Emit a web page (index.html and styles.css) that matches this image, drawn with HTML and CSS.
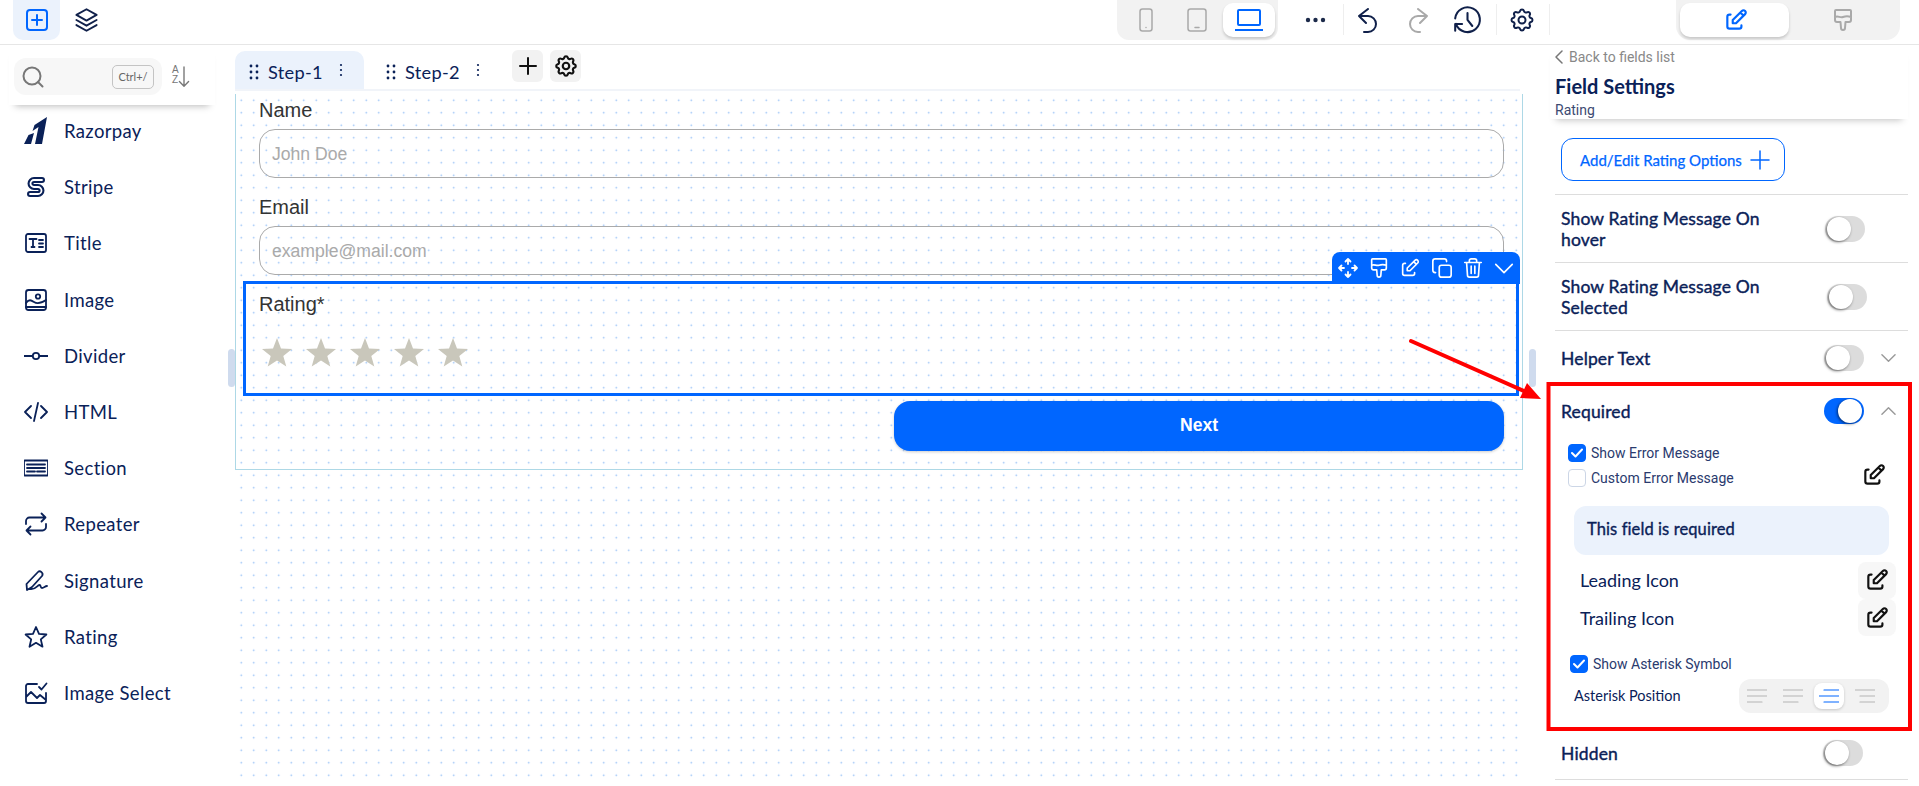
FILE: index.html
```html
<!DOCTYPE html>
<html lang="en">
<head>
<meta charset="utf-8">
<title>Form builder</title>
<link rel="stylesheet" href="styles.css">
</head>
<body>
<svg class="defs" width="0" height="0">
  <defs>
    <symbol id="edit" viewBox="0 0 24 24"><path d="M7 7h-1a2 2 0 0 0 -2 2v9a2 2 0 0 0 2 2h9a2 2 0 0 0 2 -2v-1M20.385 6.585a2.100 2.100 0 0 0 -2.970 -2.970l-8.415 8.385v3h3l8.385 -8.415zM16 5l3 3"/></symbol>
    <symbol id="gear" viewBox="0 0 24 24"><path d="M10.325 4.317c.426 -1.756 2.924 -1.756 3.350 0a1.724 1.724 0 0 0 2.573 1.066c1.543 -.94 3.310 .826 2.370 2.370a1.724 1.724 0 0 0 1.065 2.572c1.756 .426 1.756 2.924 0 3.350a1.724 1.724 0 0 0 -1.066 2.573c.94 1.543 -.826 3.310 -2.370 2.370a1.724 1.724 0 0 0 -2.572 1.065c-.426 1.756 -2.924 1.756 -3.350 0a1.724 1.724 0 0 0 -2.573 -1.066c-1.543 .94 -3.310 -.826 -2.370 -2.370a1.724 1.724 0 0 0 -1.065 -2.572c-1.756 -.426 -1.756 -2.924 0 -3.350a1.724 1.724 0 0 0 1.066 -2.573c-.94 -1.543 .826 -3.310 2.370 -2.370c1 .608 2.296 .07 2.572 -1.065z"/><circle cx="12" cy="12" r="3"/></symbol>
    <symbol id="brush" viewBox="0 0 24 24"><path d="M5 2h14a1 1 0 0 1 1 1v9a2 2 0 0 1 -2 2h-3.500l-.5 6a2 2 0 0 1 -4 0l-.5 -6H6a2 2 0 0 1 -2 -2V3a1 1 0 0 1 1 -1zM4 9c3 -1.500 5 1 8 0s5 -1 8 0"/></symbol>
    <symbol id="grip" viewBox="0 0 10 16"><circle cx="2" cy="2" r="1.400"/><circle cx="8" cy="2" r="1.400"/><circle cx="2" cy="8" r="1.400"/><circle cx="8" cy="8" r="1.400"/><circle cx="2" cy="14" r="1.400"/><circle cx="8" cy="14" r="1.400"/></symbol>
    <symbol id="kebab" viewBox="0 0 4 14"><circle cx="2" cy="2" r="1.100"/><circle cx="2" cy="7" r="1.100"/><circle cx="2" cy="12" r="1.100"/></symbol>
  </defs>
</svg>

<header class="topbar">
  <button class="add-btn">
    <svg class="ic ic-22 blue" viewBox="0 0 22 22"><rect x="1" y="1" width="20" height="20" rx="3"/><path d="M11 6v10M6 11h10"/></svg>
  </button>
  <svg class="ic ic-layers navy-dark" viewBox="3 2 18 19"><path d="M12 3l8 4.500 -8 4.500 -8 -4.500zM4 11.500l8 4.500 8 -4.500M4 15.500l8 4.500 8 -4.500"/></svg>

  <div class="devices">
    <svg class="ic dev-phone grey" viewBox="0 0 14 24"><rect x="1" y="1" width="12" height="22" rx="2.500"/><path d="M7 19.500v.1"/></svg>
    <svg class="ic dev-tablet grey" viewBox="0 0 20 24"><rect x="1" y="1" width="18" height="22" rx="2.500"/><path d="M8 19.500h4"/></svg>
    <span class="dev-active">
      <svg class="ic dev-laptop blue" viewBox="0 0 28 24"><rect x="3" y="2" width="22" height="15" rx="1"/><path d="M0 22h28"/></svg>
    </span>
  </div>

  <svg class="tool-dots" viewBox="0 0 21 6"><circle cx="3" cy="3" r="2.200"/><circle cx="10.500" cy="3" r="2.200"/><circle cx="18" cy="3" r="2.200"/></svg>
  <span class="sep sep-a"></span>
  <svg class="ic tool-undo navy-dark" viewBox="0 0 20 26"><path d="M10 1L1 8l7 7M1 8h9a8 8 0 0 1 0 16H6"/></svg>
  <svg class="ic tool-redo grey" viewBox="0 0 20 26"><path d="M10 1l9 7 -7 7M19 8h-9a8 8 0 0 0 0 16h2"/></svg>
  <svg class="ic tool-hist navy-dark" viewBox="0 0 24 24"><path d="M12 7v5l3.500 4.500M3.050 11a9 9 0 1 1 .5 4m-.5 5v-5h5" transform="translate(0 -.5)"/></svg>
  <span class="sep sep-b"></span>
  <svg class="ic tool-gear navy-dark"><use href="#gear"/></svg>
  <span class="sep sep-c"></span>

  <div class="modes">
    <span class="mode-active"><svg class="ic ic-26 blue"><use href="#edit"/></svg></span>
    <span class="mode-idle"><svg class="ic ic-24 grey"><use href="#brush"/></svg></span>
  </div>
</header>

<div class="main">
  <aside class="sidebar">
    <div class="search-head">
      <div class="search">
        <svg class="ic search-ic" viewBox="0 0 22 22"><circle cx="10" cy="10" r="8.500"/><path d="M16 16l4.500 4.500"/></svg>
        <span class="kbd">Ctrl+/</span>
      </div>
      <svg class="ic sort-ic" viewBox="0 0 14 24"><path d="M7 1v21M2 17l5 5 5 -5"/></svg>
      <span class="sort-az">A<br>Z</span>
    </div>
    <ul class="items">
      <li class="item"><svg class="item-ic solid" viewBox="0 0 24 28"><path d="M23 0l-5 27h-7l3.500 -17 -6 4 2 -6zM4.500 18l5.500 -2 -3 11H0z"/></svg>Razorpay</li>
      <li class="item"><svg class="item-ic" viewBox="0 0 24 24"><path class="s-out" d="M18 5H10a3.500 3.500 0 0 0 0 7h4a3.500 3.500 0 0 1 0 7H6"/><path class="s-in" d="M18 5H10a3.500 3.500 0 0 0 0 7h4a3.500 3.500 0 0 1 0 7H6"/></svg>Stripe</li>
      <li class="item"><svg class="item-ic line" viewBox="0 0 24 24"><rect x="2" y="3" width="20" height="18" rx="2"/><path d="M5.500 8h7M9 8v8M7.500 16h3M15 9h4M15 12.500h4M15 16h4"/></svg>Title</li>
      <li class="item"><svg class="item-ic line" viewBox="0 0 24 24"><rect x="2" y="2" width="20" height="20" rx="2.500"/><circle cx="14" cy="8.500" r="2.200"/><path d="M2 15c3 -4 5 -3 8 -1s6 2 12 -2M2 19h20"/></svg>Image</li>
      <li class="item"><svg class="item-ic line" viewBox="0 0 24 24"><path d="M0 12h8M16 12h8"/><circle cx="12" cy="12" r="3.200"/></svg>Divider</li>
      <li class="item"><svg class="item-ic line" viewBox="0 0 24 24"><path d="M7 6l-6 6 6 6M17 6l6 6 -6 6M14 3l-4 18"/></svg>HTML</li>
      <li class="item"><svg class="item-ic line" viewBox="0 0 24 24"><rect x="0" y="4.500" width="24" height="15" rx=".5"/><path d="M3 8.500h18M3 12h18M3 15.500h8M13 15.500h8"/></svg>Section</li>
      <li class="item"><svg class="item-ic line" viewBox="0 0 24 24"><path d="M2 12v-3a3.500 3.500 0 0 1 3.500 -3.500h16m-4 -4l4 4 -4 4M22 12v3a3.500 3.500 0 0 1 -3.500 3.500h-16m4 4l-4 -4 4 -4"/></svg>Repeater</li>
      <li class="item"><svg class="item-ic line" viewBox="0 0 24 24"><path d="M3 21l-.5 -6L14 3c2 -2 6 1 4 4L8 18zM6 20c5 1 7 -3 9 -4s1 3 3 3 3 -2 5 -2"/></svg>Signature</li>
      <li class="item"><svg class="item-ic line" viewBox="0 0 24 24"><path d="M12 2l3 6.800 7.400 .7 -5.600 4.900 1.700 7.300 -6.500 -3.900 -6.500 3.900 1.700 -7.300 -5.600 -4.900 7.400 -.7z"/></svg>Rating</li>
      <li class="item"><svg class="item-ic line" viewBox="0 0 24 24"><path d="M13 3H4a2 2 0 0 0 -2 2v15a2 2 0 0 0 2 2h16a2 2 0 0 0 2 -2v-8M2 16l5 -5 6 6 3 -3 6 5M15 6l2.500 2.500 5 -6"/></svg>Image Select</li>
    </ul>
  </aside>

  <section class="canvas">
    <span class="handle handle-l"></span>
    <nav class="tabs">
      <div class="tab tab-on">
        <svg class="grip"><use href="#grip"/></svg><span class="tab-name">Step-1</span><svg class="kebab"><use href="#kebab"/></svg>
      </div>
      <div class="tab tab-off">
        <svg class="grip"><use href="#grip"/></svg><span class="tab-name">Step-2</span><svg class="kebab"><use href="#kebab"/></svg>
      </div>
      <span class="tab-btn tab-plus"><svg class="ic ic-18 black" viewBox="0 0 18 18"><path d="M9 1v16M1 9h16"/></svg></span>
      <span class="tab-btn"><svg class="ic ic-26 black"><use href="#gear"/></svg></span>
    </nav>
    <div class="stage">
      <div class="frame">
        <div class="field">
          <label class="f-label">Name</label>
          <div class="f-input">John Doe</div>
        </div>
        <div class="field field-next">
          <label class="f-label">Email</label>
          <div class="f-input">example@mail.com</div>
        </div>
        <div class="rating-box">
          <div class="toolbar">
            <svg class="ic tb" viewBox="1 1 22 22"><path d="M12 3v5M12 16v5M3 12h5M16 12h5M9.500 5.500L12 3l2.500 2.500M9.500 18.500L12 21l2.500 -2.500M5.500 9.500L3 12l2.500 2.500M18.500 9.500L21 12l-2.500 2.500"/></svg>
            <svg class="ic tb"><use href="#brush"/></svg>
            <svg class="ic tb"><use href="#edit"/></svg>
            <svg class="ic tb" viewBox="0 0 24 24"><rect x="9" y="9" width="13" height="13" rx="2.500"/><path d="M17 5V4.500A2.500 2.500 0 0 0 14.500 2h-10A2.500 2.500 0 0 0 2 4.500v10A2.500 2.500 0 0 0 4.500 17H5"/></svg>
            <svg class="ic tb" viewBox="0 0 24 24"><path d="M3 6h18M8 6V4a2 2 0 0 1 2 -2h4a2 2 0 0 1 2 2v2M5 6l1 14a2 2 0 0 0 2 2h8a2 2 0 0 0 2 -2l1 -14M10 10v8M14 10v8"/></svg>
            <svg class="ic tb" viewBox="0 0 24 24"><path d="M3 8l9 9 9 -9"/></svg>
          </div>
          <div class="f-label">Rating*</div>
          <div class="stars">
            <svg class="star" viewBox="0 0 30 30"><path d="M15 1l4 10.500 11 .5 -8.700 7 3 10.500L15 23.500 5.700 29.500l3 -10.500L0 12l11 -.5z"/></svg>
            <svg class="star" viewBox="0 0 30 30"><path d="M15 1l4 10.500 11 .5 -8.700 7 3 10.500L15 23.500 5.700 29.500l3 -10.500L0 12l11 -.5z"/></svg>
            <svg class="star" viewBox="0 0 30 30"><path d="M15 1l4 10.500 11 .5 -8.700 7 3 10.500L15 23.500 5.700 29.500l3 -10.500L0 12l11 -.5z"/></svg>
            <svg class="star" viewBox="0 0 30 30"><path d="M15 1l4 10.500 11 .5 -8.700 7 3 10.500L15 23.500 5.700 29.500l3 -10.500L0 12l11 -.5z"/></svg>
            <svg class="star" viewBox="0 0 30 30"><path d="M15 1l4 10.500 11 .5 -8.700 7 3 10.500L15 23.500 5.700 29.500l3 -10.500L0 12l11 -.5z"/></svg>
          </div>
        </div>
        <button class="next">Next</button>
      </div>
    </div>
    <span class="handle handle-r"></span>
  </section>

  <aside class="panel">
    <div class="p-head">
      <div class="p-back"><svg class="ic back-ic" viewBox="0 0 8 14"><path d="M7 1L1 7l6 6"/></svg>Back to fields list</div>
      <div class="p-title">Field Settings</div>
      <div class="p-sub">Rating</div>
    </div>
    <div class="p-add">
      <button class="add-opt">Add/Edit Rating Options<svg class="ic add-plus" viewBox="0 0 20 20"><path d="M10 1v18M1 10h18"/></svg></button>
    </div>
    <div class="p-row">
      <span class="p-label">Show Rating Message On hover</span>
      <span class="toggle"></span>
    </div>
    <div class="p-row">
      <span class="p-label">Show Rating Message On Selected</span>
      <span class="toggle toggle-r2"></span>
    </div>
    <div class="p-row p-row-plain p-row-helper">
      <span class="p-label">Helper Text</span>
      <span class="toggle toggle-l1"></span>
      <svg class="ic chev" viewBox="0 0 16 10"><path d="M1 1.500l7 7 7 -7"/></svg>
    </div>
    <div class="p-row p-row-plain">
      <span class="p-label">Required</span>
      <span class="toggle toggle-l1 toggle-on"></span>
      <svg class="ic chev" viewBox="0 0 16 10"><path d="M1 8.500l7 -7 7 7"/></svg>
    </div>
    <div class="req">
      <div class="chk-row"><span class="chk chk-on"><svg class="ic chk-ic" viewBox="0 0 12 10"><path d="M1 5l3.500 3.500L11 1.500"/></svg></span>Show Error Message</div>
      <div class="chk-row"><span class="chk"></span>Custom Error Message<svg class="ic ic-26 custom-edit black"><use href="#edit"/></svg></div>
      <div class="msg">This field is required</div>
      <div class="icon-row"><span>Leading Icon</span><span class="icon-btn"><svg class="ic ic-26 black"><use href="#edit"/></svg></span></div>
      <div class="icon-row icon-row-b"><span>Trailing Icon</span><span class="icon-btn"><svg class="ic ic-26 black"><use href="#edit"/></svg></span></div>
      <div class="chk-row chk-row-ast"><span class="chk chk-on"><svg class="ic chk-ic" viewBox="0 0 12 10"><path d="M1 5l3.500 3.500L11 1.500"/></svg></span>Show Asterisk Symbol</div>
      <div class="ast-row">
        <span class="ast-label">Asterisk Position</span>
        <div class="ast-group">
          <span class="ast"><svg class="ic ast-ic grey-l" viewBox="0 0 20 14"><path d="M0 1h20M0 7h20M0 13h15"/></svg></span>
          <span class="ast"><svg class="ic ast-ic grey-l" viewBox="0 0 20 14"><path d="M0 1h20M0 7h20M0 13h15"/></svg></span>
          <span class="ast ast-on"><svg class="ic ast-ic blue-l" viewBox="0 0 20 14"><path d="M5 1h15M0 7h20M5 13h15"/></svg></span>
          <span class="ast"><svg class="ic ast-ic grey-l" viewBox="0 0 20 14"><path d="M0 1h20M5 7h15M5 13h15"/></svg></span>
        </div>
      </div>
    </div>
    <div class="p-row p-row-hidden">
      <span class="p-label">Hidden</span>
      <span class="toggle toggle-l2"></span>
    </div>
  </aside>
</div>

<svg class="annot" viewBox="0 0 1919 786" width="1919" height="786">
  <rect x="1548.500" y="384" width="361.500" height="345" fill="none" stroke="#ff0000" stroke-width="4"/>
  <path d="M1411 341L1526 392" stroke="#ff0000" stroke-width="4" stroke-linecap="round" fill="none"/>
  <path d="M1541 399L1520 398 1527 383z" fill="#ff0000"/>
</svg>
</body>
</html>
```

FILE: styles.css
```css
* { box-sizing: border-box; }
html, body { margin: 0; padding: 0; }
body {
  position: relative;
  width: 1919px;
  height: 786px;
  overflow: hidden;
  background: #fff;
  font-family: "Lato", "Liberation Sans", sans-serif;
  color: #0a2158;
}
button { font: inherit; border: 0; padding: 0; cursor: pointer; }
ul { list-style: none; margin: 0; padding: 0; }
.defs { position: absolute; }

.ic { fill: none; stroke: currentColor; stroke-width: 2; stroke-linecap: round; stroke-linejoin: round; flex: none; display: block; }
.ic-22 { width: 22px; height: 22px; }
.ic-24 { width: 24px; height: 24px; }
.ic-26 { width: 26px; height: 26px; }
.ic-18 { width: 18px; height: 18px; }
.blue { color: #0066ff; }
.grey { color: #a9a9a9; }
.dark { color: #1c1c1c; }
.black { color: #111; }
.navy-dark { color: #10204a; }
.grey-l { color: #b4b4b4; }
.blue-l { color: #0066ff; }

/* top bar */
.topbar {
  display: flex;
  align-items: flex-start;
  height: 45px;
  border-bottom: 1px solid #e6e6e6;
  background: #fff;
}
.add-btn {
  width: 47px; height: 40px; margin-left: 13px;
  display: flex; align-items: center; justify-content: center;
  background: #ebf2fc;
  border-radius: 0 0 10px 10px;
}
.ic-layers { width: 23px; height: 24px; margin: 8px 0 0 15px; stroke-width: 1.500; }
.devices {
  display: flex; align-items: center;
  width: 161px; height: 40px;
  margin-left: 1019px;
  background: #f2f2f2;
  border-radius: 0 0 12px 12px;
}
.dev-phone { width: 14px; height: 24px; margin-left: 22px; stroke-width: 1.500; }
.dev-tablet { width: 20px; height: 24px; margin-left: 34px; stroke-width: 1.500; }
.dev-active {
  display: flex; align-items: center; justify-content: center;
  width: 52px; height: 34px; margin-left: 16px;
  background: #fff; border-radius: 10px;
  box-shadow: 0 2px 3px rgba(0,0,0,.18);
}
.dev-laptop { width: 28px; height: 24px; }
.tool-dots { width: 21px; height: 6px; margin: 17px 0 0 27px; fill: #1c2a4a; flex: none; }
.sep { width: 1px; height: 31px; margin-top: 4px; background: #eeeeee; flex: none; }
.sep-a { margin-left: 17px; }
.sep-b { margin-left: 12px; }
.sep-c { margin-left: 13px; }
.tool-undo { width: 20px; height: 26px; margin: 8px 0 0 14px; }
.tool-redo { width: 20px; height: 26px; margin: 8px 0 0 30px; }
.tool-hist { width: 33px; height: 33px; margin: 4px 0 0 23px; stroke-width: 1.500; }
.tool-gear { width: 28px; height: 28px; margin: 6px 0 0 11px; stroke-width: 1.700; }
.modes {
  display: flex; align-items: center;
  width: 224px; height: 40px;
  margin-left: 126px;
  background: #f2f2f2;
  border-radius: 0 0 14px 14px;
}
.mode-active {
  display: flex; align-items: center; justify-content: center;
  width: 109px; height: 34px; margin-left: 4px;
  padding-left: 2px;
  background: #fff; border-radius: 10px;
  box-shadow: 0 2px 3px rgba(0,0,0,.18);
}
.mode-idle { display: flex; justify-content: center; flex: 1; padding-right: 4px; }

/* layout */
.main { display: flex; height: 741px; }

/* sidebar */
.sidebar { width: 224px; flex: none; }
.search-head {
  position: relative;
  display: flex;
  height: 60px;
  margin: 0 9px;
  padding: 13px 0 0 5px;
  box-shadow: 0 7px 7px -6px rgba(0,0,0,.28);
}
.search {
  display: flex; align-items: center;
  width: 148px; height: 37px;
  padding-left: 8px;
  background: #f7f7f7;
  border-radius: 12px;
}
.search-ic { width: 22px; height: 22px; color: #777; }
.kbd {
  display: flex; align-items: center; justify-content: center;
  width: 42px; height: 24px; margin-left: 68px;
  border: 1px solid #c4c4c4; border-radius: 5px;
  font: 11px "Lato", sans-serif; color: #666;
}
.sort-ic { width: 14px; height: 22px; margin: 8px 0 0 15px; color: #777; stroke-width: 1.500; }
.sort-az {
  position: absolute; left: 163px; top: 20px;
  font: 10px/10px "Liberation Sans", sans-serif; color: #777;
}
.items { margin-top: -2px; }
.item {
  display: flex; align-items: center;
  height: 56.200px;
  padding-left: 24px;
  font-size: 18.500px;
  letter-spacing: .35px;
  color: #0a2158;
}
.item-ic { width: 24px; height: 24px; margin-right: 16px; flex: none; }
.item-ic.solid { height: 28px; fill: #0a2158; }
.item-ic.line { fill: none; stroke: #0a2158; stroke-width: 1.800; stroke-linecap: round; stroke-linejoin: round; }
.s-out { fill: none; stroke: #0a2158; stroke-width: 6; stroke-linecap: round; stroke-linejoin: round; }
.s-in { fill: none; stroke: #fff; stroke-width: 1.800; stroke-linecap: round; stroke-linejoin: round; }

/* canvas */
.canvas {
  position: relative;
  flex: none;
  width: 1326px;
  padding: 0 27px 0 11px;
}
.handle {
  position: absolute; top: 304px;
  width: 7px; height: 38px;
  background: #cfdbee; border-radius: 4px;
}
.handle-l { left: 4px; }
.handle-r { right: 14px; }
.tabs {
  display: flex;
  align-items: flex-start;
  height: 46px;
  padding-top: 6px;
  border-bottom: 2px solid #f1f4f9;
  margin-right: 3px;
}
.tab {
  display: flex; align-items: center;
  height: 38px;
  padding-top: 4px;
  font-size: 18.200px;
  letter-spacing: .3px;
  color: #0a2158;
}
.tab-on {
  width: 129px; padding-left: 14px;
  background: #ebf2fc;
  border-radius: 10px 10px 0 0;
}
.tab-off { width: 148px; padding-left: 22px; }
.grip { width: 10px; height: 16px; fill: #0a2158; flex: none; }
.tab-name { margin-left: 9px; }
.kebab { width: 4px; height: 14px; margin: -4px 0 0 16px; fill: #0a2158; flex: none; }
.tab-btn {
  display: flex; align-items: center; justify-content: center;
  width: 31px; height: 32px;
  margin: -1px 0 0 7px;
  background: #f2f2f2;
  border-radius: 6px;
}
.tab-plus { margin-left: 0; }
.stage {
  height: 692px;
  margin-top: 3px;
  background-image: radial-gradient(circle, #8fbcf5 .75px, transparent 1.050px);
  background-size: 12.500px 12.500px;
}
.frame {
  display: flow-root;
  height: 376px;
  border: 1px solid #add8e6;
  border-top: 0;
  padding: 0 3px 0 7px;
}
.field { margin: 0 15px 0 16px; }
.field-next { padding-top: 13px; }
.f-label {
  display: block;
  height: 35px;
  font: 20px/33px "Liberation Sans", sans-serif;
  color: #333;
}
.f-input {
  height: 49px;
  padding-left: 12px;
  border: 1px solid #aaa;
  border-radius: 16px;
  font: 17.600px/48px "Liberation Sans", sans-serif;
  color: #aaa;
}
.rating-box {
  position: relative;
  height: 115px;
  margin-top: 6px;
  padding: 4px 13px 0;
  border: 3px solid #0066ff;
}
.toolbar {
  position: absolute; right: -4px; top: -32px;
  display: flex; align-items: center; justify-content: space-between;
  width: 188px; height: 32px;
  padding: 0 5px;
  background: #0066ff;
  border-radius: 8px 8px 0 0;
}
.tb { width: 22px; height: 22px; color: #fff; stroke-width: 1.800; }
.stars { display: flex; gap: 14px; margin: 14px 0 0 3px; }
.star { width: 30px; height: 30px; fill: #c9c7bb; flex: none; }
.next {
  display: block;
  width: 610px; height: 50px;
  margin: 5px 15px 0 auto;
  padding-bottom: 2px;
  background: #0066ff;
  border-radius: 16px;
  box-shadow: 0 1px 3px rgba(0,0,0,.2);
  color: #fff;
  font: bold 17.600px "Liberation Sans", sans-serif;
}

/* panel */
.panel { width: 369px; flex: none; padding: 0 11px 0 5px; }
.p-head {
  height: 74px;
  margin: 0 0 0 -5px;
  padding-left: 5px;
  box-shadow: 0 7px 7px -6px rgba(0,0,0,.25);
}
.p-back {
  display: flex; align-items: center;
  height: 24px;
  font: 14px "Roboto", sans-serif; color: #888;
}
.back-ic { width: 8px; height: 14px; margin-right: 6px; stroke-width: 1.500; color: #777; }
.p-title { height: 30px; font-size: 20px; font-weight: 700; line-height: 30px; padding-top: 2px; color: #0a2158; }
.p-sub { font: 14px/18px "Roboto", sans-serif; color: #3c4a72; padding-top: 2px; }
.p-add { height: 76px; padding: 19px 0 0 6px; border-bottom: 1px solid #dddddd; }
.add-opt {
  display: flex; align-items: center;
  width: 224px; height: 43px;
  padding-left: 18px;
  background: #fff;
  border: 1px solid #0066ff;
  border-radius: 12px;
  color: #0066ff;
  font-size: 15px;
  -webkit-text-stroke: .25px currentColor;
}
.add-plus { width: 20px; height: 20px; margin-left: auto; margin-right: 14px; stroke-width: 1.500; }
.p-row {
  display: flex; align-items: center;
  height: 68px;
  padding-left: 6px;
  border-bottom: 1px solid #dddddd;
}
.p-row-plain { height: 52px; border-bottom: 0; }
.p-row-helper { height: 54px; }
.p-row-hidden { height: 53px; }
.p-label {
  width: 231px;
  font-size: 17.500px;
  line-height: 21px;
  letter-spacing: .15px;
  -webkit-text-stroke: .4px currentColor;
  color: #0a2158;
}
.toggle {
  position: relative;
  width: 40px; height: 26px;
  margin-left: 33px;
  background: #dcdcdc;
  border-radius: 13px;
  flex: none;
}
.toggle::after {
  content: "";
  position: absolute; left: 2px; top: 1px;
  width: 24px; height: 24px;
  background: #fff; border-radius: 50%;
  box-shadow: -1px 1px 3px rgba(0,0,0,.55);
}
.toggle-r2 { margin-left: 35px; }
.toggle-l1 { margin-left: 32px; }
.toggle-l2 { margin-left: 31px; }
.toggle-on { background: #0066ff; }
.toggle-on::after { left: 14px; }
.chev { width: 15px; height: 10px; margin-left: 17px; color: #999; stroke-width: 1.500; }
.req { padding: 4px 19px 14px 13px; height: 290px; }
.chk-row {
  display: flex; align-items: center;
  height: 25px;
  padding-bottom: 1px;
  font: 14px "Roboto", sans-serif;
  color: #2a3a6e;
}
.chk {
  display: flex; align-items: center; justify-content: center;
  width: 18px; height: 18px; margin-right: 5px;
  border: 1px solid #ccd6e6;
  border-radius: 4px;
  background: #fff;
}
.chk-on { background: #0066ff; border-color: #0066ff; }
.chk-ic { width: 12px; height: 10px; color: #fff; }
.custom-edit { margin-left: auto; margin-right: 2px; margin-top: -6px; }
.msg {
  height: 49px;
  margin: 15px 0 0 6px;
  padding-left: 13px;
  background: #ebf2fc;
  border-radius: 12px;
  font-size: 16.500px;
  line-height: 47px;
  letter-spacing: .1px;
  -webkit-text-stroke: .35px currentColor;
  color: #0a2158;
}
.icon-row {
  display: flex; align-items: center; justify-content: space-between;
  height: 38px;
  margin: 6px -7px 0 12px;
  font-size: 18px;
  color: #0a2158;
}
.icon-row-b { height: 37px; margin-top: 0; }
.icon-btn {
  display: flex; align-items: center; justify-content: center;
  width: 38px; height: 37px;
  background: #f7f7f7;
  border-radius: 8px;
}
.chk-row-ast { height: 24px; margin: 16px 0 0 2px; }
.ast-row { display: flex; align-items: center; justify-content: space-between; margin: 3px 0 0 6px; }
.ast-label { font-size: 14.500px; color: #0a2158; padding-bottom: 2px; }
.ast-group {
  display: flex; align-items: center; gap: 6px;
  width: 150px; height: 34px;
  padding: 0 3px;
  background: #f2f2f2;
  border-radius: 12px;
}
.ast {
  display: flex; align-items: center; justify-content: center;
  width: 30px; height: 26px;
}
.ast-on { background: #fff; border-radius: 8px; box-shadow: 0 1px 3px rgba(0,0,0,.18); }
.ast-ic { width: 20px; height: 14px; stroke-width: 1.200; }

.annot { position: absolute; left: 0; top: 0; pointer-events: none; }
```
